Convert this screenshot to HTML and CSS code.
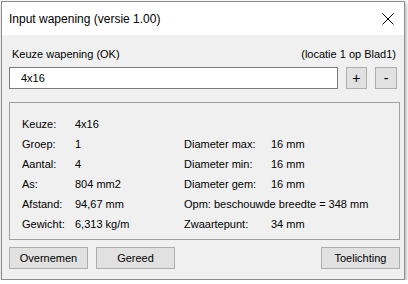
FILE: index.html
```html
<!DOCTYPE html>
<html>
<head>
<meta charset="utf-8">
<link rel="stylesheet" href="styles.css">
</head>
<body>
<div class="window">
  <div class="titlebar">
    <span class="title">Input wapening (versie 1.00)</span>
    <svg class="close" width="12" height="12" viewBox="0 0 12 12"><path d="M0.5 0.5 L11.5 11.5 M11.5 0.5 L0.5 11.5" stroke="#000" stroke-width="1" fill="none"/></svg>
  </div>
  <div class="content">
    <div class="labelrow">
      <span>Keuze wapening (OK)</span>
      <span>(locatie 1 op Blad1)</span>
    </div>
    <div class="inputrow">
      <div class="input">4x16</div>
      <div class="btn small">+</div>
      <div class="btn small">-</div>
    </div>
    <div class="group">
      <div class="grid">
        <div class="lbl first">Keuze:</div><div class="val first">4x16</div><div class="first"></div><div class="first"></div>
        <div class="lbl">Groep:</div><div class="val">1</div><div class="lbl">Diameter max:</div><div class="val">16 mm</div>
        <div class="lbl">Aantal:</div><div class="val">4</div><div class="lbl">Diameter min:</div><div class="val">16 mm</div>
        <div class="lbl">As:</div><div class="val">804 mm2</div><div class="lbl">Diameter gem:</div><div class="val">16 mm</div>
        <div class="lbl">Afstand:</div><div class="val">94,67 mm</div><div class="lbl span">Opm: beschouwde breedte = 348 mm</div>
        <div class="lbl">Gewicht:</div><div class="val">6,313 kg/m</div><div class="lbl">Zwaartepunt:</div><div class="val">34 mm</div>
      </div>
    </div>
    <div class="buttons">
      <div class="btn wide">Overnemen</div>
      <div class="btn wide">Gereed</div>
      <div class="spacer"></div>
      <div class="btn wide">Toelichting</div>
    </div>
  </div>
</div>
</body>
</html>
```

FILE: styles.css
```css
html, body {
  margin: 0;
  padding: 0;
  background: #ffffff;
}
body {
  font-family: "Liberation Sans", Arial, sans-serif;
  font-size: 11px;
  color: #000;
}
.window {
  margin: 1px 0 0 1px;
  width: 402px;
  height: 277px;
  border: 1px solid #8c8c8c;
  background: #f0f0f0;
  box-shadow: 1px 2px 4px rgba(0,0,0,0.35);
  display: flex;
  flex-direction: column;
}
.titlebar {
  height: 33px;
  background: #ffffff;
  display: flex;
  align-items: center;
  justify-content: space-between;
  padding: 0 10px 0 7px;
  flex: none;
}
.title {
  font-family: "Liberation Sans", Arial, sans-serif;
  font-size: 12px;
  padding-top: 1px;
}
.close {
  display: block;
  margin-top: 1px;
}
.content {
  padding: 0 7px 0 7px;
  display: flex;
  flex-direction: column;
}
.labelrow {
  display: flex;
  justify-content: space-between;
  height: 18px;
  margin-top: 10px;
  align-items: center;
  padding: 0 1px 0 3px;
}
.inputrow {
  display: flex;
  gap: 8px;
  margin-top: 4px;
  height: 22px;
}
.input {
  width: 320px;
  background: #fff;
  border: 1px solid #7a7a7a;
  padding-left: 11px;
  display: flex;
  align-items: center;
  height: 20px;
}
.btn {
  background: #e1e1e1;
  border: 1px solid #adadad;
  display: flex;
  align-items: center;
  justify-content: center;
  height: 20px;
  box-sizing: content-box;
}
.small {
  width: 20px;
  font-size: 14px;
}
.group {
  margin-top: 13px;
  height: 136px;
  width: 389px;
  border: 1px solid #a0a0a0;
}
.grid {
  display: grid;
  grid-template-columns: 53px 109px 87px auto;
  grid-auto-rows: 20px;
  padding: 11px 0 0 12px;
  align-items: center;
}
.grid .first {
  height: 21px;
  line-height: 21px;
}
.span {
  grid-column: 3 / span 2;
}
.buttons {
  display: flex;
  gap: 8px;
  margin-top: 7px;
  width: 391px;
}
.wide {
  width: 77px;
}
.spacer {
  flex: 1;
}
```
